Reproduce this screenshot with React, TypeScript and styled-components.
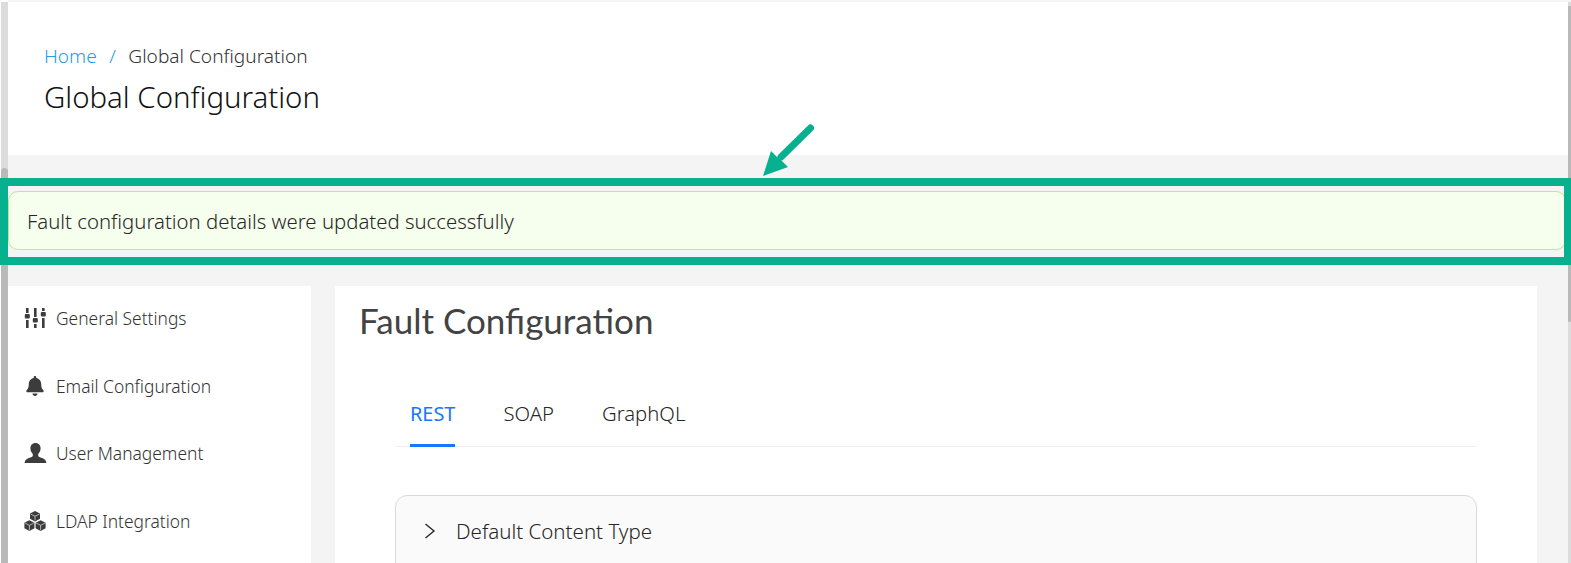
import React from "react";
import styled, { createGlobalStyle } from "styled-components";
import { FaBell } from "react-icons/fa";

const Global = createGlobalStyle`
  html, body { margin: 0; padding: 0; background: #fff; }
  body { font-family: "Noto Sans", "Open Sans", sans-serif; font-weight: 300; color: #2e2e2e; }
`;

const Viewport = styled.div`
  position: relative;
  width: 1571px;
  height: 563px;
  overflow: hidden;
  background: #fff;
`;

const Page = styled.div`
  margin-left: 8px;
  width: 1563px;
  height: 563px;
  padding-top: 2px;
  box-sizing: border-box;
  background: #f4f4f4;
  display: flex;
  flex-direction: column;
`;

const Header = styled.header`
  height: 153px;
  flex: none;
  background: #fff;
  padding: 42px 0 0 36px;
  box-sizing: border-box;
`;

const Crumbs = styled.nav`
  display: flex;
  font-size: 19.1px;
  line-height: 24px;
  height: 24px;
  color: #333;
`;

const CrumbLink = styled.a`
  color: #1f9be8;
`;

const CrumbSep = styled.span`
  color: #1f9be8;
  margin: 0 12.5px;
`;

const PageTitle = styled.h1`
  margin: 11px 0 0;
  font-size: 29.4px;
  line-height: 36px;
  font-weight: 300;
  color: #111;
`;

const Alert = styled.div`
  margin: 36px 5px 0 0;
  height: 59px;
  flex: none;
  box-sizing: border-box;
  background: #f6ffed;
  border: 1px solid #b7eb8f;
  border-radius: 10px;
  padding: 0 0 0 18px;
  display: flex;
  align-items: center;
  font-size: 20.35px;
  color: #262626;
`;

const Content = styled.div`
  margin-top: 36px;
  display: flex;
  gap: 24px;
  flex: 1;
  min-height: 0;
`;

const Sidebar = styled.aside`
  width: 303px;
  flex: none;
  background: #fff;
  padding-top: 15.4px;
  box-sizing: border-box;
`;

const NavItem = styled.div`
  display: flex;
  align-items: center;
  height: 34px;
  margin-bottom: 33.4px;
  padding-left: 16px;
  font-size: 17.4px;
  color: #333;
`;

const NavIcon = styled.span`
  width: 32px;
  flex: none;
  display: flex;
  align-items: center;
  color: #3c3c3c;
`;

const Main = styled.main`
  width: 1202px;
  flex: none;
  background: #fff;
  padding: 0 60px 0 24px;
  box-sizing: border-box;
`;

const MainTitle = styled.h2`
  margin: 13px 0 0;
  font-family: "Lato", sans-serif;
  font-size: 35px;
  line-height: 42px;
  font-weight: 400;
  color: #434343;
`;

const TabBar = styled.div`
  margin: 49px 0 0 36px;
  height: 57px;
  box-sizing: border-box;
  border-bottom: 1px solid #eeeeee;
  display: flex;
  gap: 48px;
  padding-left: 15px;
`;

const Tab = styled.div<{ $active?: boolean }>`
  height: 57px;
  box-sizing: border-box;
  padding-top: ${(p) => (p.$active ? "11px" : "10px")};
  font-size: ${(p) => (p.$active ? "19.9px" : "20.3px")};
  line-height: 26px;
  font-weight: ${(p) => (p.$active ? 400 : 300)};
  color: ${(p) => (p.$active ? "#1677ff" : "#262626")};
  border-bottom: 3px solid ${(p) => (p.$active ? "#1677ff" : "transparent")};
`;

const Accordion = styled.div`
  margin: 48px 0 0 36px;
  height: 120px;
  box-sizing: border-box;
  background: #fafafa;
  border: 1px solid #d9d9d9;
  border-radius: 12px;
`;

const AccordionHead = styled.div`
  display: flex;
  align-items: center;
  height: 70px;
  padding-left: 28px;
  font-size: 20.5px;
  color: #262626;
`;

const Chevron = styled.svg`
  width: 12px;
  height: 16px;
  margin-right: 20px;
  flex: none;
`;

const ScrollTrack = styled.div<{ $side: "left" | "right" }>`
  position: absolute;
  top: 2px;
  bottom: 0;
  ${(p) => (p.$side === "left" ? "left: 1px; width: 7px;" : "right: 0; width: 3px;")}
  background: #dcdcdc;
`;

const ScrollThumb = styled.div<{ $side: "left" | "right" }>`
  position: absolute;
  left: 0;
  right: 0;
  background: #b9b9b9;
  ${(p) =>
    p.$side === "left"
      ? "top: 166px; bottom: 0; border-radius: 6px 6px 0 0;"
      : "top: 4px; height: 316px; border-radius: 0 0 3px 3px;"}
`;

const Highlight = styled.div`
  position: absolute;
  left: 0;
  top: 178px;
  width: 1571px;
  height: 87px;
  box-sizing: border-box;
  border: 8px solid #07b08f;
  border-right-width: 7px;
  pointer-events: none;
`;

const Arrow = styled.svg`
  position: absolute;
  left: 755px;
  top: 118px;
  width: 70px;
  height: 62px;
`;

const SlidersIcon = () => (
  <svg width="23" height="20" viewBox="0 0 23 20" fill="#3c3c3c">
    <rect x="2" y="0" width="2.6" height="5" />
    <rect x="0.8" y="6" width="5" height="4.5" rx="1" />
    <rect x="2" y="12" width="2.6" height="8" />
    <rect x="10" y="0" width="2.6" height="9" />
    <rect x="8.8" y="10" width="5" height="4.5" rx="1" />
    <rect x="10" y="16" width="2.6" height="4" />
    <rect x="18" y="0" width="2.6" height="3" />
    <rect x="16.8" y="4" width="5" height="4.5" rx="1" />
    <rect x="18" y="10" width="2.6" height="10" />
  </svg>
);

const UserIcon = () => (
  <svg width="23" height="20" viewBox="0 0 23 20" fill="#3c3c3c">
    <path d="M11.5 0C8.3 0 6.4 2.3 6.4 5.3c0 2.2 1 4.4 2.4 5.6v1.5c0 .9-1 1.5-3 2.3C3 15.7 1 16.5.6 20h21.8c-.4-3.5-2.4-4.3-5.2-5.3-2-.8-3-1.4-3-2.3v-1.5c1.4-1.2 2.4-3.4 2.4-5.6C16.6 2.3 14.7 0 11.5 0z" />
  </svg>
);

const CubesIcon = () => (
  <svg width="22" height="20" viewBox="0 0 22 20" fill="#3c3c3c">
    <path d="M11 0l5 2.4v5.4l-5 2.6-5-2.6V2.4z" />
    <path d="M5.4 9.2l5 2.5v5.6l-5 2.6-5-2.6v-5.6z" />
    <path d="M16.6 9.2l5 2.5v5.6l-5 2.6-5-2.6v-5.6z" />
    <path d="M6.5 3l4.5 2.2L15.5 3M11 5.2V9.6M1 12.1l4.4 2.2 4.4-2.2M5.4 14.3v5M12.2 12.1l4.4 2.2 4.4-2.2M16.6 14.3v5" fill="none" stroke="#fff" strokeWidth="0.6" />
  </svg>
);

const NAV = [
  { label: "General Settings", icon: <SlidersIcon /> },
  { label: "Email Configuration", icon: <FaBell size={20} style={{ marginLeft: 1 }} /> },
  { label: "User Management", icon: <UserIcon /> },
  { label: "LDAP Integration", icon: <CubesIcon /> },
];

export default function App() {
  return (
    <Viewport>
      <Global />
      <Page>
        <Header>
          <Crumbs>
            <CrumbLink>Home</CrumbLink>
            <CrumbSep>/</CrumbSep>
            <span>Global Configuration</span>
          </Crumbs>
          <PageTitle>Global Configuration</PageTitle>
        </Header>
        <Alert>Fault configuration details were updated successfully</Alert>
        <Content>
          <Sidebar>
            {NAV.map((n) => (
              <NavItem key={n.label}>
                <NavIcon>{n.icon}</NavIcon>
                {n.label}
              </NavItem>
            ))}
          </Sidebar>
          <Main>
            <MainTitle>Fault Configuration</MainTitle>
            <TabBar>
              <Tab $active>REST</Tab>
              <Tab>SOAP</Tab>
              <Tab>GraphQL</Tab>
            </TabBar>
            <Accordion>
              <AccordionHead>
                <Chevron viewBox="0 0 12 16" fill="none" stroke="#262626" strokeWidth="1.4">
                  <path d="M1.5 1 L10 8 L1.5 15" />
                </Chevron>
                Default Content Type
              </AccordionHead>
            </Accordion>
          </Main>
        </Content>
      </Page>
      <ScrollTrack $side="left">
        <ScrollThumb $side="left" />
      </ScrollTrack>
      <ScrollTrack $side="right">
        <ScrollThumb $side="right" />
      </ScrollTrack>
      <Highlight />
      <Arrow viewBox="0 0 70 62">
        <path d="M55.5 10 L26 39" stroke="#07b08f" strokeWidth="7" strokeLinecap="round" fill="none" />
        <path d="M8 58 L16 33 L22 39 L28 44 L33 49 Z" fill="#07b08f" />
      </Arrow>
    </Viewport>
  );
}
